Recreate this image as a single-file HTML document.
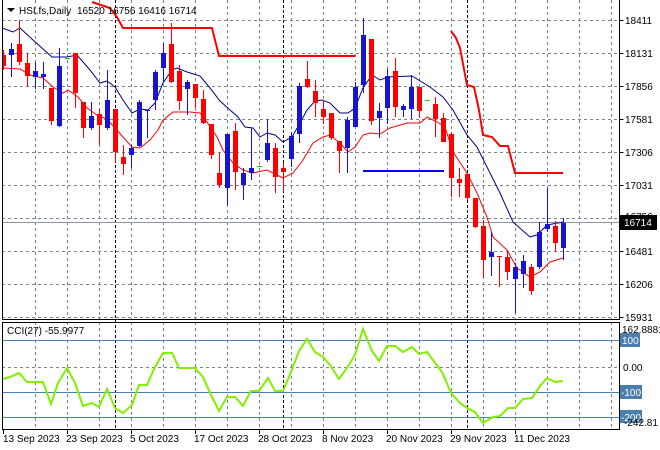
<!DOCTYPE html>
<html><head><meta charset="utf-8"><style>
html,body{margin:0;padding:0;background:#fff;width:660px;height:450px;overflow:hidden}
svg{display:block}
text{font-family:"Liberation Sans",sans-serif;font-size:10px;fill:#000}
</style></head><body>
<svg width="660" height="450" xmlns="http://www.w3.org/2000/svg">
<rect width="660" height="450" fill="#fff"/>
<g stroke="#7a8592" stroke-width="1" stroke-dasharray="3,3" fill="none" shape-rendering="crispEdges">
<path d="M2 20.5H619M2 53.5H619M2 86.5H619M2 119.5H619M2 152.5H619M2 185.5H619M2 218.5H619M2 251.5H619M2 284.5H619M2 317.5H619"/>
<path d="M35.5 0V319M67.5 0V319M99.5 0V319M131.5 0V319M163.5 0V319M195.5 0V319M227.5 0V319M259.5 0V319M291.5 0V319M323.5 0V319M355.5 0V319M387.5 0V319M419.5 0V319M451.5 0V319M483.5 0V319M515.5 0V319M547.5 0V319M579.5 0V319M611.5 0V319"/>
<path d="M35.5 322V429M67.5 322V429M99.5 322V429M131.5 322V429M163.5 322V429M195.5 322V429M227.5 322V429M259.5 322V429M291.5 322V429M323.5 322V429M355.5 322V429M387.5 322V429M419.5 322V429M451.5 322V429M483.5 322V429M515.5 322V429M547.5 322V429M579.5 322V429M611.5 322V429"/>
<path d="M2 367.5H619"/>
</g>
<g stroke="#000" stroke-dasharray="3,2" shape-rendering="crispEdges">
<path d="M115.5 0V429M283.5 0V429M467.5 0V429"/>
</g>
<g stroke="#4a7fad" shape-rendering="crispEdges">
<path d="M2 340.5H619M2 392.5H619M2 417.5H619"/>
</g>
<path d="M2 222.5H620" stroke="#8a96a2" shape-rendering="crispEdges"/>
<g fill="none" stroke="#f00" stroke-width="2">
<polyline points="92,2 110,8 117,17 123,28 212,28 219,56 355,56"/>
<polyline points="451,31 456,38 460,48 467,85 474,87 479,110 483,135 492,137 500,146 508,146 515,173 563,173"/>
</g>
<path d="M363 171H444" stroke="#0000ff" stroke-width="2"/>
<polyline fill="none" stroke="#000080" stroke-width="1" points="2,28 13,32 20,28 33,40 52,57 67,57 77,55 90,70 100,83 107,81 115,87 123,100 132,113 140,109 148,110 155,103 163,83 172,70 177,68 187,72 200,76 210,88 220,101 230,110 238,117 245,127 253,128 260,137 267,133 275,135 283,142 292,137 300,123 307,110 315,101 322,100 330,103 340,113 348,113 355,108 363,88 372,75 380,80 388,77 412,76 430,87 443,97 453,110 467,135 477,147 487,167 500,193 513,222 522,230 530,237 537,235 547,225 563,222"/>
<polyline fill="none" stroke="#f00" stroke-width="1" points="2,68 20,69 30,75 43,78 53,87 63,93 68,90 78,97 87,108 97,115 107,119 115,128 123,137 132,147 140,148 150,140 158,130 163,120 173,112 190,112 200,113 207,122 217,137 223,150 233,163 243,170 253,173 267,170 277,175 283,178 293,173 303,160 313,143 323,137 330,135 340,143 348,152 355,147 363,135 370,133 380,134 390,128 407,123 420,123 427,117 437,122 445,127 453,152 467,173 477,193 487,217 493,237 507,250 517,268 530,277 540,272 550,262 563,258"/>
<g shape-rendering="crispEdges">
<g stroke="#f00" fill="#f00">
<path d="M3.5 50V70M19.5 20V65M27.5 53V87M51.5 88V125M75.5 53V108M83.5 102V138M99.5 109V145M115.5 109V162M123.5 145V175M171.5 23V83M179.5 65V110M195.5 84V108M203.5 90V124M211.5 124V159M219.5 153V188M235.5 123V190M275.5 143V193M283.5 163V192M307.5 61V88M315.5 80V117M323.5 100V124M331.5 113V140M339.5 141V173M371.5 39V125M395.5 58V117M419.5 87V118M435.5 97V137M443.5 113V142M451.5 132V197M459.5 168V197M467.5 174V200M475.5 198V228M483.5 220V278M499.5 256V287M507.5 251V280M531.5 264V295M555.5 221V252"/>
</g>
<g fill="#f00">
<rect x="2" y="55" width="4" height="11"/><rect x="17" y="44" width="5" height="18"/><rect x="25" y="63" width="5" height="13"/><rect x="49" y="88" width="5" height="33"/><rect x="73" y="53" width="5" height="40"/><rect x="81" y="102" width="5" height="26"/><rect x="97" y="114" width="5" height="11"/><rect x="113" y="109" width="5" height="43"/><rect x="121" y="157" width="5" height="7"/><rect x="169" y="44" width="5" height="38"/><rect x="177" y="71" width="5" height="30"/><rect x="193" y="84" width="5" height="14"/><rect x="201" y="99" width="5" height="24"/><rect x="209" y="124" width="5" height="31"/><rect x="217" y="173" width="5" height="12"/><rect x="233" y="131" width="5" height="41"/><rect x="273" y="148" width="5" height="29"/><rect x="281" y="168" width="5" height="4"/><rect x="305" y="79" width="5" height="8"/><rect x="313" y="91" width="5" height="12"/><rect x="321" y="109" width="5" height="8"/><rect x="329" y="113" width="5" height="25"/><rect x="337" y="141" width="5" height="10"/><rect x="369" y="39" width="5" height="82"/><rect x="393" y="71" width="5" height="36"/><rect x="417" y="87" width="5" height="24"/><rect x="433" y="104" width="5" height="15"/><rect x="441" y="118" width="5" height="24"/><rect x="449" y="134" width="5" height="44"/><rect x="457" y="179" width="5" height="4"/><rect x="465" y="174" width="5" height="24"/><rect x="473" y="198" width="5" height="29"/><rect x="481" y="226" width="5" height="34"/><rect x="497" y="256" width="5" height="1"/><rect x="505" y="257" width="5" height="15"/><rect x="529" y="267" width="5" height="24"/><rect x="553" y="226" width="5" height="17"/>
</g>
<g stroke="#1414d2">
<path d="M11.5 43V77M35.5 62V89M43.5 62V89M59.5 48V127M91.5 102V130M107.5 70V130M131.5 145V168M139.5 100V147M147.5 110V138M155.5 70V110M163.5 43V82M187.5 80V115M227.5 134V205M243.5 168V200M251.5 128V180M267.5 119V162M291.5 132V167M299.5 83V143M347.5 117V173M355.5 82V127M363.5 18V93M379.5 103V138M387.5 69V124M403.5 104V117M411.5 75V119M491.5 232V276M515.5 263V313M523.5 255V288M539.5 222V269M547.5 188V232M563.5 218V260"/>
</g>
<g fill="#1414d2">
<rect x="9" y="49" width="5" height="6"/><rect x="33" y="71" width="5" height="6"/><rect x="41" y="74" width="5" height="3"/><rect x="57" y="66" width="5" height="60"/><rect x="89" y="116" width="5" height="12"/><rect x="105" y="100" width="5" height="28"/><rect x="129" y="148" width="5" height="7"/><rect x="137" y="102" width="5" height="44"/><rect x="145" y="110" width="5" height="1"/><rect x="153" y="72" width="5" height="28"/><rect x="161" y="53" width="5" height="15"/><rect x="185" y="82" width="5" height="7"/><rect x="225" y="134" width="5" height="54"/><rect x="241" y="173" width="5" height="12"/><rect x="249" y="168" width="5" height="5"/><rect x="265" y="143" width="5" height="17"/><rect x="289" y="136" width="5" height="23"/><rect x="297" y="86" width="5" height="48"/><rect x="345" y="120" width="5" height="28"/><rect x="353" y="87" width="5" height="40"/><rect x="361" y="35" width="5" height="50"/><rect x="377" y="111" width="5" height="7"/><rect x="385" y="76" width="5" height="32"/><rect x="401" y="106" width="5" height="4"/><rect x="409" y="87" width="5" height="22"/><rect x="489" y="252" width="5" height="5"/><rect x="513" y="267" width="5" height="12"/><rect x="521" y="261" width="5" height="13"/><rect x="537" y="232" width="5" height="35"/><rect x="545" y="224" width="5" height="5"/><rect x="561" y="223" width="5" height="25"/>
</g>
<g stroke="#00e000"><path d="M65 58.5H70M257 166.5H262M425 100.5H430"/></g>
</g>
<polyline fill="none" stroke="#80f000" stroke-width="2" points="3,379 10,377 19,373 27,382 43,382 51,404 58,383 67,368 75,383 83,406 92,403 99,407 107,389 115,408 123,413 132,405 139,385 147,385 155,367 163,353 172,353 179,368 195,368 203,377 211,395 219,411 227,397 235,397 243,406 251,391 259,391 268,378 275,391 283,391 291,372 299,351 307,339 315,352 323,357 330,365 339,379 347,368 355,355 363,329 372,351 379,361 387,346 395,346 403,352 412,347 419,354 427,352 442,372 451,393 460,403 467,408 475,412 483,423 493,417 500,416 508,408 515,408 523,399 532,398 540,386 547,378 555,382 563,381"/>
<g stroke="#000" fill="none" shape-rendering="crispEdges">
<path d="M2.5 0V319.5H619.5V0"/>
<path d="M2.5 322.5H619.5V429.5H2.5Z"/>
<path d="M619.5 20.5h4M619.5 53.5h4M619.5 86.5h4M619.5 119.5h4M619.5 152.5h4M619.5 185.5h4M619.5 251.5h4M619.5 284.5h4M619.5 317.5h4"/>
<path d="M3.5 430v4M67.5 430v4M131.5 430v4M195.5 430v4M259.5 430v4M323.5 430v4M387.5 430v4M451.5 430v4M515.5 430v4"/>
</g>
<path d="M7 8h8l-4 4z" fill="#000"/>
<text x="19" y="14">HSI.fs,Daily</text>
<text x="77" y="14">16520 16756 16416 16714</text>
<text x="7" y="334">CCI(27) -55.9977</text>
<g>
<text x="625" y="24">18411</text><text x="625" y="57">18131</text><text x="625" y="90">17856</text><text x="625" y="123">17581</text><text x="625" y="156">17306</text><text x="625" y="189">17031</text><text x="625" y="220">16756</text><text x="625" y="255">16481</text><text x="625" y="288">16206</text><text x="625" y="321">15931</text>
</g>
<rect x="620" y="215" width="37" height="15" fill="#000"/>
<text x="624" y="226" style="fill:#fff">16714</text>
<text x="622" y="333">162.8881</text>
<rect x="620" y="333" width="20" height="14" fill="#4a7fad"/><text x="622" y="344" style="fill:#fff">100</text>
<text x="623" y="371">0.00</text>
<rect x="620" y="385" width="22" height="14" fill="#4a7fad"/><text x="621" y="396" style="fill:#fff">-100</text>
<rect x="620" y="410" width="22" height="13" fill="#4a7fad"/><text x="621" y="421" style="fill:#fff">-200</text>
<text x="624" y="426">-242.81</text>
<g>
<text x="3" y="442">13 Sep 2023</text><text x="66" y="442">23 Sep 2023</text><text x="130" y="442">5 Oct 2023</text><text x="194" y="442">17 Oct 2023</text><text x="258" y="442">28 Oct 2023</text><text x="322" y="442">8 Nov 2023</text><text x="386" y="442">20 Nov 2023</text><text x="450" y="442">29 Nov 2023</text><text x="514" y="442">11 Dec 2023</text>
</g>
</svg>
</body></html>
